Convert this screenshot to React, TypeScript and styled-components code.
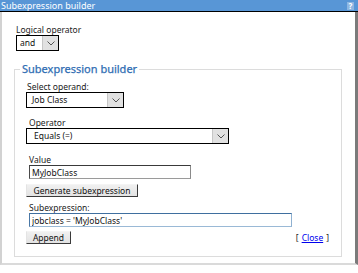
import React from "react";
import styled, { createGlobalStyle } from "styled-components";

const Global = createGlobalStyle`
  html, body { margin: 0; padding: 0; background: #fff; }
  body {
    font-family: "Noto Sans", "Liberation Sans", sans-serif;
    font-size: 8.5px;
    color: #222;
  }
  * { box-sizing: border-box; }
`;

const Dialog = styled.div`
  width: 358px;
  height: 265px;
  display: flex;
  flex-direction: column;
`;

const TitleBar = styled.div`
  height: 12px;
  background: #5896d6;
  border-bottom: 1px solid #000;
  display: flex;
  align-items: flex-start;
  justify-content: space-between;
  padding: 0 4px 0 1px;
  color: #fff;
  font-size: 9px;
  line-height: 11px;
`;

const Help = styled.span`
  width: 7px;
  height: 8px;
  margin-top: 2px;
  background: #8db6e2;
  color: #fff;
  font-size: 8px;
  font-weight: 700;
  line-height: 8px;
  text-align: center;
`;

const Body = styled.div`
  flex: 1;
  border-left: 2px solid #d2d2d2;
  border-right: 3px solid #7b7b7b;
  border-bottom: 2px solid #dadada;
  padding: 12px 13px 0 12px;
`;

const TopGroup = styled.div`
  padding-left: 2px;
`;

const Label = styled.label<{ $indent?: number }>`
  display: block;
  line-height: 11px;
  padding-left: ${(p) => p.$indent ?? 0}px;
  color: #222;
`;

const SelectBox = styled.div<{ $w: number }>`
  width: ${(p) => p.$w}px;
  height: 16px;
  border: 1px solid #000;
  background: #fff;
  display: flex;
`;

const SelectText = styled.span<{ $pad: number }>`
  flex: 1;
  padding-left: ${(p) => p.$pad}px;
  line-height: 14px;
  color: #111;
`;

const ArrowBtn = styled.span`
  width: 16px;
  background: #e1e1e1;
  border-left: 1px solid #c6c6c6;
  display: flex;
  align-items: center;
  justify-content: center;
`;

const Fieldset = styled.fieldset`
  margin: 11px 0 0 0;
  padding: 0 11px 12px 11px;
  border: 1px solid #dcdcdc;
  min-width: 0;
`;

const Legend = styled.legend`
  padding: 0 2px;
  margin-left: -6px;
  color: #2f6db3;
  font-size: 11px;
  font-weight: 400;
  line-height: 14px;
  -webkit-text-stroke: 0.25px #2f6db3;
`;

const Field = styled.div<{ $top: number }>`
  margin-top: ${(p) => p.$top}px;
`;

const TextInput = styled.input<{ $w: number; $blue?: boolean }>`
  display: block;
  margin-left: 3px;
  width: ${(p) => p.$w}px;
  height: 14px;
  padding: 0 2px;
  font: inherit;
  color: #111;
  border: 1px solid;
  border-color: ${(p) =>
    p.$blue ? "#3f6f9f #8fb1d1 #9ab9d6 #4a78a6" : "#3a3a3a #8a8a8a #9a9a9a #4a4a4a"};
  outline: none;
  background: #fff;
`;

const Button = styled.button<{ $w: number }>`
  display: block;
  width: ${(p) => p.$w}px;
  height: 13px;
  padding: 0;
  font: inherit;
  line-height: 11px;
  color: #111;
  background: linear-gradient(#f0f0f0, #e3e3e3);
  border: 1px solid;
  border-color: #f4f4f4 #3a3a3a #3a3a3a #e4e4e4;
`;

const ActionRow = styled.div`
  margin-top: 4px;
  display: flex;
  justify-content: space-between;
  align-items: center;
`;

const CloseWrap = styled.span`
  color: #222;
  padding-right: 1px;
`;

const CloseLink = styled.a`
  color: #0000ee;
  text-decoration: underline;
  margin: 0 3px;
`;

const Chevron = () => (
  <svg width="8" height="5" viewBox="0 0 8 5">
    <path d="M0.5 0.5 L4 4 L7.5 0.5" fill="none" stroke="#555" strokeWidth="1" />
  </svg>
);

const Select = ({ w, pad, value }: { w: number; pad: number; value: string }) => (
  <SelectBox $w={w}>
    <SelectText $pad={pad}>{value}</SelectText>
    <ArrowBtn>
      <Chevron />
    </ArrowBtn>
  </SelectBox>
);

export default function App() {
  return (
    <>
      <Global />
      <Dialog>
        <TitleBar>
          <span>Subexpression builder</span>
          <Help>?</Help>
        </TitleBar>
        <Body>
          <TopGroup>
            <Label>Logical operator</Label>
            <Select w={43} pad={3} value="and" />
          </TopGroup>
          <Fieldset>
            <Legend>Subexpression builder</Legend>
            <Field $top={5}>
              <Label $indent={1}>Select operand:</Label>
              <Select w={98} pad={5} value="Job Class" />
            </Field>
            <Field $top={9}>
              <Label $indent={3}>Operator</Label>
              <Select w={203} pad={7} value="Equals (=)" />
            </Field>
            <Field $top={10}>
              <Label $indent={3}>Value</Label>
              <TextInput $w={162} defaultValue="MyJobClass" readOnly />
            </Field>
            <Field $top={5}>
              <Button $w={112}>Generate subexpression</Button>
            </Field>
            <Field $top={5}>
              <Label $indent={3}>Subexpression:</Label>
              <TextInput $w={263} $blue defaultValue="jobclass = 'MyJobClass'" readOnly />
            </Field>
            <ActionRow>
              <Button $w={45}>Append</Button>
              <CloseWrap>
                [<CloseLink href="#">Close</CloseLink>]
              </CloseWrap>
            </ActionRow>
          </Fieldset>
        </Body>
      </Dialog>
    </>
  );
}
